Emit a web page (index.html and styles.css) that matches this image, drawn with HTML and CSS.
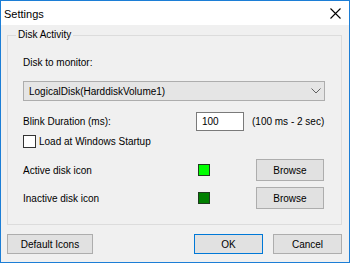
FILE: index.html
```html
<!DOCTYPE html>
<html>
<head>
<meta charset="utf-8">
<link rel="stylesheet" href="styles.css">
</head>
<body>
<div class="window">
  <div class="titlebar">
    <span class="title">Settings</span>
    <svg class="close" width="11" height="11" viewBox="0 0 11 11"><path d="M0.5 0.5 L10.5 10.5 M10.5 0.5 L0.5 10.5" stroke="#000" stroke-width="1.1" fill="none"/></svg>
  </div>
  <div class="content">
    <div class="group">
      <span class="group-label">Disk Activity</span>
      <div class="row-label">Disk to monitor:</div>
      <div class="combo">
        <span>LogicalDisk(HarddiskVolume1)</span>
        <svg width="10" height="6" viewBox="0 0 10 6"><path d="M0.5 0.5 L5 5 L9.5 0.5" stroke="#606060" stroke-width="1" fill="none"/></svg>
      </div>
      <div class="row blink">
        <span class="lbl">Blink Duration (ms):</span>
        <span class="input">100</span>
        <span class="hint">(100 ms - 2 sec)</span>
      </div>
      <div class="row check">
        <span class="box"></span>
        <span>Load at Windows Startup</span>
      </div>
      <div class="row icon-row first">
        <span class="lbl">Active disk icon</span>
        <span class="swatch active"></span>
        <span class="btn browse">Browse</span>
      </div>
      <div class="row icon-row second">
        <span class="lbl">Inactive disk icon</span>
        <span class="swatch inactive"></span>
        <span class="btn browse">Browse</span>
      </div>
    </div>
    <div class="buttons">
      <span class="btn default">Default Icons</span>
      <span class="spacer"></span>
      <span class="btn ok">OK</span>
      <span class="btn cancel">Cancel</span>
    </div>
  </div>
</div>
</body>
</html>
```
FILE: styles.css
```css
html, body {
  margin: 0;
  padding: 0;
  background: #f0f0f0;
}
body {
  font-family: "Liberation Sans", Arial, sans-serif;
  font-size: 10px;
  color: #000;
}
.window {
  width: 350px;
  height: 263px;
  box-sizing: border-box;
  border: 1px solid #1c7ed6;
  display: flex;
  flex-direction: column;
  background: #f0f0f0;
}
.titlebar {
  height: 24px;
  flex: none;
  background: #fff;
  display: flex;
  align-items: center;
  justify-content: space-between;
  padding: 0 8px 0 3px;
}
.title {
  font-size: 11px;
  position: relative;
  top: 1px;
}
.close {
  display: block;
}
.content {
  flex: 1;
  padding: 10px 7px 0 6px;
  display: flex;
  flex-direction: column;
}
.group {
  position: relative;
  height: 190px;
  box-sizing: border-box;
  border: 1px solid #dcdcdc;
  padding: 20px 16px 0 15px;
  display: flex;
  flex-direction: column;
}
.group-label {
  position: absolute;
  top: -8px;
  left: 8px;
  padding: 0 2px;
  line-height: 14px;
  background: #f0f0f0;
}
.row-label {
  line-height: 14px;
}
.combo {
  margin-top: 11px;
  height: 20px;
  box-sizing: border-box;
  border: 1px solid #adadad;
  background: #e5e5e5;
  display: flex;
  align-items: center;
  justify-content: space-between;
  padding: 0 3px 0 5px;
}
.combo svg {
  display: block;
}
.row {
  display: flex;
  align-items: center;
}
.blink {
  margin-top: 11px;
  height: 19px;
}
.blink .lbl {
  width: 173px;
}
.input {
  width: 48px;
  height: 19px;
  box-sizing: border-box;
  border: 1px solid #7a7a7a;
  background: #fff;
  padding: 0 5px;
  line-height: 17px;
}
.hint {
  margin-left: 8px;
}
.check {
  margin-top: 4px;
  height: 13px;
}
.box {
  width: 13px;
  height: 13px;
  box-sizing: border-box;
  border: 1px solid #333;
  background: #fff;
  margin-right: 3px;
}
.icon-row {
  height: 22px;
}
.icon-row.first {
  margin-top: 11px;
}
.icon-row.second {
  margin-top: 6px;
}
.icon-row .lbl {
  width: 175px;
}
.swatch {
  width: 12px;
  height: 12px;
  box-sizing: border-box;
  border: 1px solid #1f3a1f;
}
.swatch.active {
  background: #00ff00;
}
.swatch.inactive {
  background: #008000;
}
.btn {
  display: flex;
  align-items: center;
  justify-content: center;
  box-sizing: border-box;
  border: 1px solid #adadad;
  background: #e1e1e1;
}
.browse {
  margin-left: 46px;
  width: 68px;
  height: 22px;
}
.buttons {
  margin-top: 9px;
  display: flex;
  height: 20px;
}
.default {
  width: 86px;
  height: 20px;
}
.spacer {
  flex: 1;
}
.ok {
  width: 69px;
  height: 20px;
  border-color: #0078d7;
}
.cancel {
  width: 69px;
  height: 20px;
  margin-left: 10px;
}
```
